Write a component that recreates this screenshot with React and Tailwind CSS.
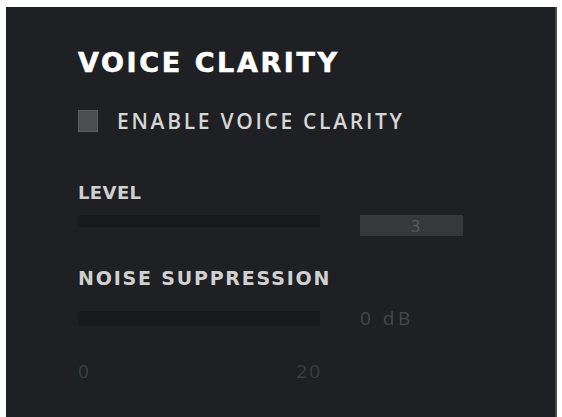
import React, { useState } from 'react';

export default function App() {
    const [enabled, setEnabled] = useState(false);

    return (
        <div className="w-[562px] h-[417px] bg-white pt-[7px] pl-[6px] overflow-hidden">
            <div className="w-[551px] h-[410px] bg-[#1e2023] border-r-2 border-[#4a4b4d] pl-[72px] pt-[39px]" style={{ fontFamily: '"Open Sans", sans-serif' }}>
                <h1 className="text-[27px] leading-[34px] font-bold tracking-[2.6px] text-white" style={{ fontFamily: '"DejaVu Sans", sans-serif', WebkitTextStroke: '0.6px white' }}>
                    VOICE CLARITY
                </h1>

                <label className="mt-[30px] flex items-center gap-[19px] cursor-pointer">
                    <input type="checkbox" className="hidden" checked={enabled} onChange={(e) => setEnabled(e.target.checked)} />
                    <span className="w-[20px] h-[22px] bg-[#4b4d50] border border-[#5a5c5e]"></span>
                    <span className="text-[21px] leading-[22px] font-semibold tracking-[2.7px] text-[#d6d6d6]">ENABLE VOICE CLARITY</span>
                </label>

                <div className="mt-[50px] text-[18px] leading-[22px] font-semibold tracking-[0.4px] text-[#d0d0d0]" style={{ fontFamily: '"DejaVu Sans", sans-serif' }}>LEVEL</div>
                <div className="mt-[11px] flex items-start">
                    <div className="w-[242px] h-[12px] bg-[#17191b] rounded-[2px]"></div>
                    <div className="ml-[40px] w-[103px] h-[21px] bg-[#36383b] flex items-center justify-center text-[16px] text-[#5a5c5f] pl-[8px]">3</div>
                </div>

                <div className="mt-[31px] text-[19px] leading-[22px] font-semibold tracking-[1.8px] text-[#d0d0d0]" style={{ fontFamily: '"DejaVu Sans", sans-serif' }}>NOISE SUPPRESSION</div>
                <div className="mt-[15px] flex items-center">
                    <div className="w-[242px] h-[15px] bg-[#17191b] rounded-[2px]"></div>
                    <div className="ml-[40px] text-[19px] tracking-[3.5px] text-[#46484b]">0 dB</div>
                </div>

                <div className="mt-[24px] w-[242px] flex justify-between text-[19px] tracking-[2px] text-[#3c3e41]">
                    <span>0</span>
                    <span className="-mr-[2px]">20</span>
                </div>
            </div>
        </div>
    );
}
